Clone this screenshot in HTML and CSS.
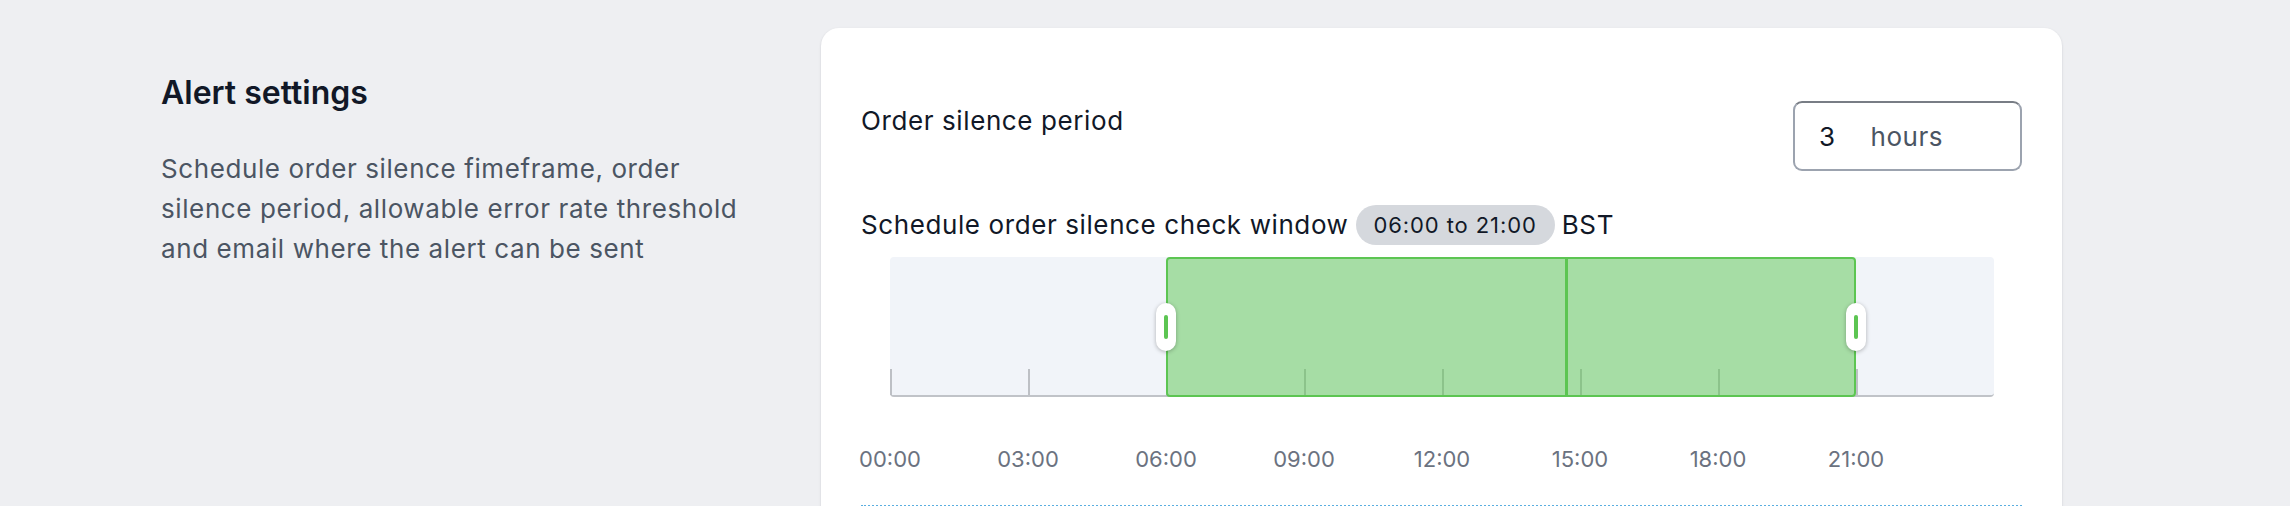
FILE: index.html
```html
<!DOCTYPE html>
<html lang="en">
<head>
<meta charset="utf-8">
<title>Alert settings</title>
<link rel="stylesheet" href="styles.css">
</head>
<body>
<div class="page">
  <section class="intro">
    <h2 class="title">Alert settings</h2>
    <p class="desc">Schedule order silence fimeframe, order silence period, allowable error rate threshold and email where the alert can be sent</p>
  </section>
  <section class="card">
    <div class="period-row">
      <div class="label">Order silence period</div>
      <div class="input"><span class="num">3</span><span class="unit">hours</span></div>
    </div>
    <div class="window-row">
      <span>Schedule order silence check window</span>
      <span class="pill">06:00 to 21:00</span>
      <span>BST</span>
    </div>
    <div class="slider">
      <div class="track">
        <div class="ticks">
          <span class="tick"></span><span class="tick"></span><span class="tick"></span><span class="tick"></span>
          <span class="tick"></span><span class="tick"></span><span class="tick"></span><span class="tick"></span>
        </div>
        <div class="range" style="left:25%;width:62.5%"></div>
        <div class="now" style="left:61.1%"></div>
        <div class="handle" style="left:calc(25% - 10px)"><span class="grip"></span></div>
        <div class="handle" style="left:calc(87.5% - 10px)"><span class="grip"></span></div>
      </div>
    </div>
    <div class="axis">
      <span>00:00</span><span>03:00</span><span>06:00</span><span>09:00</span>
      <span>12:00</span><span>15:00</span><span>18:00</span><span>21:00</span>
    </div>
    <div class="sep"></div>
  </section>
</div>
</body>
</html>
```
FILE: styles.css
```css
html, body {
  margin: 0;
  height: 100%;
  overflow: hidden;
}
body {
  background: #eeeff2;
  font-family: Inter, "Noto Sans", "Liberation Sans", sans-serif;
  color: #111827;
}
.page {
  display: flex;
  gap: 60px;
  padding: 28px 0 0 161px;
}
.intro {
  width: 600px;
  flex: none;
  padding-top: 45px;
}
.title {
  margin: 0;
  font-size: 32px;
  line-height: 40px;
  font-weight: 600;
  color: #111827;
}
.desc {
  margin: 36px 0 0;
  width: 590px;
  font-size: 26px;
  line-height: 40px;
  letter-spacing: 0.6px;
  color: #4b5563;
}
.card {
  width: 1241px;
  flex: none;
  box-sizing: border-box;
  height: 700px;
  background: #fff;
  border-radius: 18px;
  padding: 73px 40px 0;
  box-shadow: 0 1px 3px rgba(16, 24, 40, 0.10), 0 1px 2px rgba(16, 24, 40, 0.06);
}
.period-row {
  display: flex;
  justify-content: space-between;
  align-items: flex-start;
}
.label {
  font-size: 26px;
  line-height: 40px;
  letter-spacing: 0.6px;
  color: #111827;
}
.input {
  width: 229px;
  height: 70px;
  box-sizing: border-box;
  border: 2px solid #9ca3af;
  border-top-color: #787d85;
  border-radius: 9px;
  display: flex;
  align-items: center;
  padding-left: 24px;
  font-size: 26px;
  letter-spacing: 0.5px;
  gap: 35px;
}
.num { color: #111827; }
.unit { color: #4b5563; }
.window-row {
  margin-top: 34px;
  display: flex;
  align-items: center;
  gap: 7px;
  font-size: 26px;
  line-height: 40px;
  letter-spacing: 0.6px;
  color: #111827;
}
.pill {
  background: #d5d8dd;
  border-radius: 20px;
  padding: 0 18px;
  font-size: 22px;
  line-height: 40px;
  height: 40px;
  letter-spacing: 0.9px;
}
.slider {
  margin: 12px 0 0 29px;
  width: 1104px;
}
.track {
  position: relative;
  height: 138px;
  background: #f1f4f9;
  border-bottom: 2px solid #c0c3c8;
  border-radius: 4px;
  display: flex;
  flex-direction: column;
  justify-content: flex-end;
}
.ticks {
  display: flex;
  height: 26px;
}
.tick {
  flex: 1;
  border-left: 2px solid #bdc0c5;
}
.range {
  position: absolute;
  top: 0;
  bottom: -2px;
  box-sizing: border-box;
  background: rgba(92, 197, 82, 0.5);
  border: 2px solid #5cc552;
  border-radius: 4px;
}
.now {
  position: absolute;
  top: 0;
  bottom: -2px;
  width: 3px;
  background: #5cc552;
}
.handle {
  position: absolute;
  top: 46px;
  width: 20px;
  height: 48px;
  background: #fff;
  border-radius: 10px;
  box-shadow: 0 1px 4px rgba(0, 0, 0, 0.28);
  display: flex;
  align-items: center;
  justify-content: center;
}
.grip {
  width: 4px;
  height: 24px;
  border-radius: 2px;
  background: #5cc552;
}
.axis {
  display: flex;
  margin: 47px 0 0 -40px;
  font-size: 22px;
  line-height: 30px;
  color: #6b7280;
}
.axis span {
  width: 138px;
  text-align: center;
  flex: none;
}
.sep {
  margin-top: 31px;
  border-top: 2px dotted #5aaee0;
}
```
